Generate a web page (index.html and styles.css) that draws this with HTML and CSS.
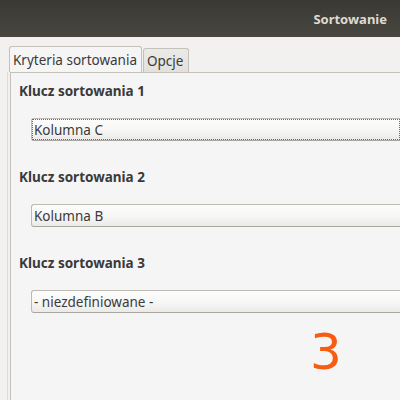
FILE: index.html
```html
<!DOCTYPE html>
<html lang="pl">
<head>
<meta charset="utf-8">
<title>Sortowanie</title>
<link rel="stylesheet" href="styles.css">
</head>
<body>
<div class="window">
  <header class="titlebar"><span class="title">Sortowanie</span></header>
  <nav class="tabs">
    <div class="tab active">Kryteria sortowania</div>
    <div class="tab">Opcje</div>
  </nav>
  <div class="frame">
    <section class="panel">
      <div class="group">
        <div class="label">Klucz sortowania 1</div>
        <div class="combo"><span class="focus">Kolumna C</span></div>
      </div>
      <div class="group">
        <div class="label">Klucz sortowania 2</div>
        <div class="combo"><span class="value">Kolumna B</span></div>
      </div>
      <div class="group">
        <div class="label">Klucz sortowania 3</div>
        <div class="combo"><span class="value">- niezdefiniowane -</span></div>
      </div>
      <div class="step">3</div>
    </section>
  </div>
</div>
</body>
</html>
```

FILE: styles.css
```css
html, body {
  margin: 0;
  padding: 0;
  width: 400px;
  height: 400px;
  overflow: hidden;
}
body {
  background: #f2f1f0;
  font-family: "Noto Sans", "DejaVu Sans", sans-serif;
  font-size: 13.5px;
  color: #3a3a3a;
}
.window {
  display: flex;
  flex-direction: column;
  height: 400px;
}
.titlebar {
  height: 37px;
  flex: none;
  background: linear-gradient(#3a3934, #48463f);
  display: flex;
  align-items: center;
  justify-content: flex-end;
  padding-right: 13px;
  box-sizing: border-box;
}
.title {
  color: #dfdbd2;
  font-weight: bold;
  font-size: 13px;
  margin-top: 1px;
}
.tabs {
  flex: none;
  display: flex;
  align-items: flex-end;
  padding-left: 9px;
  margin-top: 9px;
  height: 26px;
}
.tab {
  box-sizing: border-box;
  border: 1px solid #c4c0ba;
  border-bottom: none;
  border-radius: 3px 3px 0 0;
  padding: 0 3px;
  display: flex;
  align-items: center;
}
.tab.active {
  width: 133px;
  height: 26px;
  background: #f5f5f5;
}
.tab:not(.active) {
  width: 46px;
  height: 24px;
  margin-left: 1px;
  background: linear-gradient(#eceae7, #e3e1de);
}
.frame {
  flex: 1;
  margin-left: 7px;
  border-left: 1px solid #dedcd8;
  padding-left: 2px;
  display: flex;
}
.panel {
  flex: 1;
  background: #f5f5f5;
  border-top: 1px solid #c4c0ba;
  border-left: 1px solid #c4c0ba;
  padding-top: 10px;
  padding-left: 8px;
  display: flex;
  flex-direction: column;
}
.group {
  display: flex;
  flex-direction: column;
  margin-bottom: 28px;
}
.label {
  font-weight: bold;
  line-height: 16px;
  height: 16px;
}
.combo {
  margin-top: 19px;
  margin-left: 12px;
  height: 23px;
  box-sizing: border-box;
  border: 1px solid #bdb9b3;
  border-bottom-color: #a9a59f;
  border-right: none;
  border-radius: 3px 0 0 3px;
  background: linear-gradient(#fdfdfd, #f6f6f5 55%, #ebeae8);
  display: flex;
  align-items: stretch;
  padding: 0;
}
.value, .focus {
  display: flex;
  align-items: center;
  padding-left: 2px;
  flex: 1;
}
.focus {
  outline: 1px dotted #6b6b6b;
  outline-offset: -1px;
}
.step {
  margin-top: -14px;
  margin-left: 291px;
  font-family: "DejaVu Sans", sans-serif;
  font-size: 50px;
  line-height: 50px;
  color: #f85c10;
}
```
